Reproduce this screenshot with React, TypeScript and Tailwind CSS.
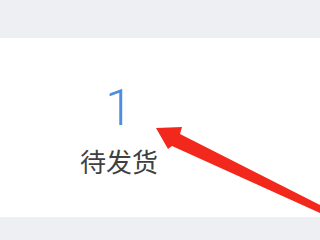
const App = () => {
	return (
		<div className="relative w-[320px] h-[240px] overflow-hidden bg-[#eeeff3] font-['Noto_Sans_CJK_SC',sans-serif]">
			<div className="h-[38px]" />
			<section className="h-[179px] bg-white flex">
				<div className="w-[238px] flex flex-col items-center pt-[41px]">
					<span className="text-[50px] leading-[58px] font-light text-[#4a8fe4] font-['Roboto',sans-serif]">
						1
					</span>
					<span className="mt-[7px] text-[26px] leading-[34px] text-[#404040]">
						待发货
					</span>
				</div>
			</section>
			<svg
				className="absolute inset-0"
				width="320"
				height="240"
				viewBox="0 0 320 240"
			>
				<polygon
					points="156,128 182,127 180,134 322,206 322,214 172,146 168,149"
					fill="#f3281c"
				/>
			</svg>
		</div>
	)
}

export default App
